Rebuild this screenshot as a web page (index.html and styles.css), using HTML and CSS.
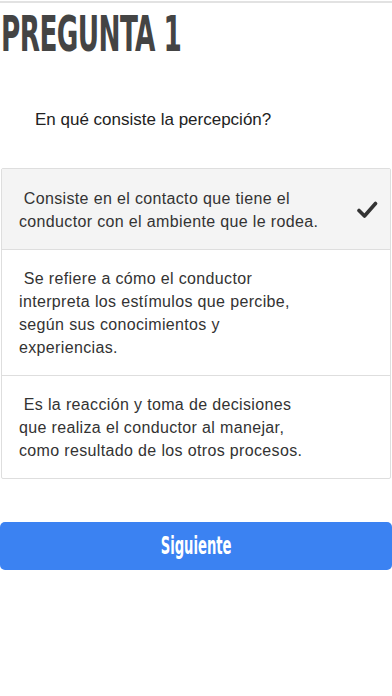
FILE: index.html
```html
<!DOCTYPE html>
<html lang="es">
<head>
  <meta charset="UTF-8">
  <meta name="viewport" content="width=device-width, initial-scale=1.0">
  <title>Pregunta 1</title>
  <link rel="stylesheet" href="styles.css">
</head>
<body>
  <div class="topline"></div>
  <h1 class="titulo">PREGUNTA 1</h1>
  <p class="pregunta">En qué consiste la percepción?</p>

  <ul class="opciones">
    <li class="opcion seleccionada">
      <span class="texto">&nbsp;Consiste en el contacto que tiene el<br>conductor con el ambiente que le rodea.</span>
      <svg class="check" width="22" height="20" viewBox="0 0 22 20">
        <path d="M3 10.5 L8.5 16 L19.5 3.5" fill="none" stroke="#333" stroke-width="3.6" stroke-linecap="round" stroke-linejoin="round"/>
      </svg>
    </li>
    <li class="opcion">
      <span class="texto">&nbsp;Se refiere a cómo el conductor<br>interpreta los estímulos que percibe,<br>según sus conocimientos y<br>experiencias.</span>
    </li>
    <li class="opcion">
      <span class="texto">&nbsp;Es la reacción y toma de decisiones<br>que realiza el conductor al manejar,<br>como resultado de los otros procesos.</span>
    </li>
  </ul>

  <button class="siguiente"><span>Siguiente</span></button>
</body>
</html>
```

FILE: styles.css
```css
body {
  margin: 0;
  background: #fff;
  font-family: "Liberation Sans", Arial, sans-serif;
  color: #333;
}
.topline {
  height: 2px;
  margin-top: 1px;
  background: #e2e2e2;
}
.titulo {
  margin: 5px 0 0 1px;
  font-family: "Liberation Sans Narrow", "DejaVu Sans Condensed", sans-serif;
  font-weight: bold;
  font-size: 50px;
  line-height: 52px;
  color: #444;
  transform: scaleX(0.585);
  transform-origin: left;
  letter-spacing: -1px;
}
.pregunta {
  margin: 50px 0 0 35px;
  font-size: 17px;
  line-height: 20px;
  color: #222;
}
.opciones {
  list-style: none;
  margin: 38px 1px 0 1px;
  padding: 0;
  border: 1px solid #dedede;
  border-radius: 2px;
}
.opcion {
  display: flex;
  align-items: center;
  justify-content: space-between;
  padding: 18px 12px 16px 17px;
  border-top: 1px solid #dedede;
  font-size: 16px;
  letter-spacing: 0.35px;
  line-height: 22.7px;
  color: #333;
}
.opcion:first-child {
  border-top: none;
  padding-top: 19px;
}
.seleccionada {
  background: #f4f4f4;
}
.check {
  flex-shrink: 0;
  margin-bottom: 2px;
}
.siguiente {
  display: block;
  width: 100%;
  height: 48px;
  margin-top: 43px;
  padding: 0;
  border: none;
  border-radius: 5px;
  background: #3b82f2;
  color: #fff;
  font-family: "Liberation Sans Narrow", "DejaVu Sans Condensed", sans-serif;
  font-weight: bold;
  font-size: 24px;
}
.siguiente span {
  display: inline-block;
  transform: scaleX(0.61);
}
```
